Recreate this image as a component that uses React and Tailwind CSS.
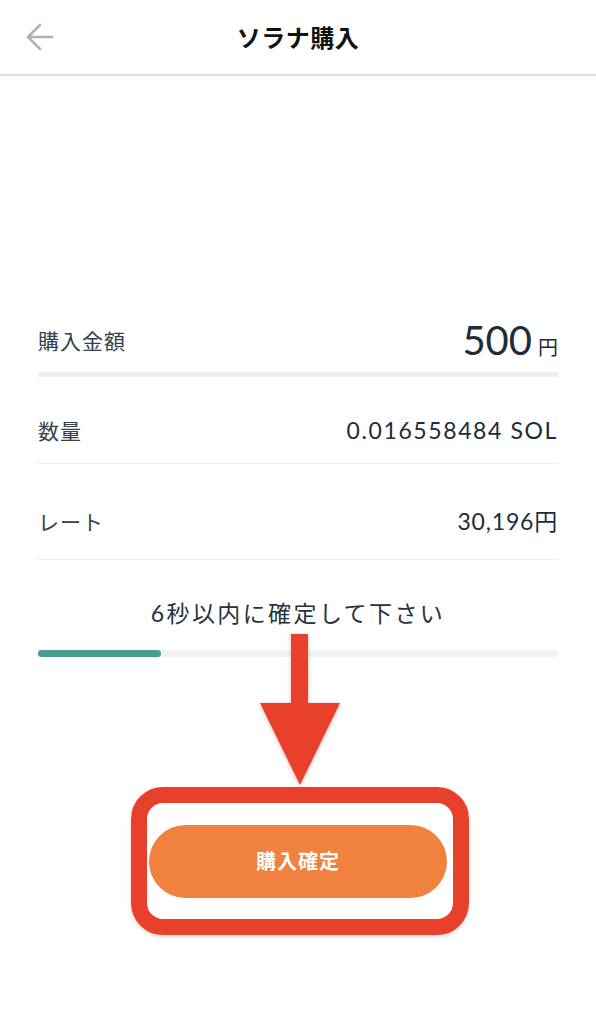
import React from "react";

const jp = { fontFamily: '"Noto Sans CJK JP", sans-serif' };
const num = { fontFamily: 'Lato, "Noto Sans CJK JP", sans-serif' };

function BackArrow() {
  return (
    <svg width="28" height="28" viewBox="0 0 28 28" fill="none" stroke="#a9b3bb" strokeWidth="2.6" strokeLinecap="round" strokeLinejoin="round">
      <path d="M2 14 H26" />
      <path d="M14 2 L2 14 L14 26" />
    </svg>
  );
}

function DownArrow() {
  return (
    <svg width="82" height="154" viewBox="0 0 82 154" className="drop-shadow-[0_1px_2px_rgba(180,40,20,0.35)]">
      <rect x="32" y="1" width="17" height="72" fill="#e8402a" />
      <polygon points="1,70 81,70 41,152" fill="#e8402a" />
    </svg>
  );
}

export default function App() {
  return (
    <div className="relative w-[596px] h-[1024px] bg-white overflow-hidden" style={jp}>
      <header className="grid grid-cols-[1fr_auto_1fr] items-center h-[76px] border-b-2 border-[#dbe2e5]">
        <div className="pl-[26px] flex items-center">
          <BackArrow />
        </div>
        <h1 className="text-[24px] font-bold text-[#111] tracking-[0.5px]">ソラナ購入</h1>
        <div />
      </header>

      <div className="px-[38px] pt-[234px]">
        <div className="flex items-center justify-between h-[62px]">
          <span className="text-[21px] tracking-[1px] text-[#36414b]">購入金額</span>
          <span className="flex items-baseline text-[#1d2c3a]">
            <span className="text-[40px] leading-none" style={num}>500</span>
            <span className="text-[20px] ml-[6px]">円</span>
          </span>
        </div>
        <div className="h-[5px] bg-[#efefef]" />

        <div className="flex items-center justify-between pt-[38px] pb-[18px]">
          <span className="text-[21px] tracking-[1px] leading-[30px] text-[#36414b]">数量</span>
          <span className="text-[23px] leading-[30px] tracking-[1.6px] text-[#1d2c3a]" style={num}>0.016558484 SOL</span>
        </div>
        <div className="h-px bg-[#ebebeb]" />

        <div className="flex items-center justify-between pt-[42px] pb-[23px]">
          <span className="text-[21px] tracking-[1px] leading-[30px] text-[#36414b]">レート</span>
          <span className="text-[23px] leading-[30px] tracking-[0.8px] text-[#1d2c3a]" style={num}>30,196円</span>
        </div>
        <div className="h-px bg-[#ebebeb]" />

        <p className="mt-[38px] text-center text-[23px] leading-[30px] tracking-[2.4px] text-[#26313c]" style={num}>6秒以内に確定して下さい</p>

        <div className="mt-[22px] h-[7px] rounded-full bg-[#f0f2f4]">
          <div className="h-full w-[123px] rounded-full bg-[#4b9d92]" />
        </div>
      </div>

      <div className="mt-[130px] ml-[131px] w-[338px] h-[148px] rounded-[32px] border-[16px] border-[#e8402a] flex items-center pl-[2px] shadow-[0_2px_4px_rgba(0,0,0,0.15)]">
        <button className="w-[298px] h-[73px] rounded-full bg-[#f0813e] text-white text-[20px] font-bold tracking-[1px]">
          購入確定
        </button>
      </div>

      <div className="absolute left-[259px] top-[633px]">
        <DownArrow />
      </div>
    </div>
  );
}
